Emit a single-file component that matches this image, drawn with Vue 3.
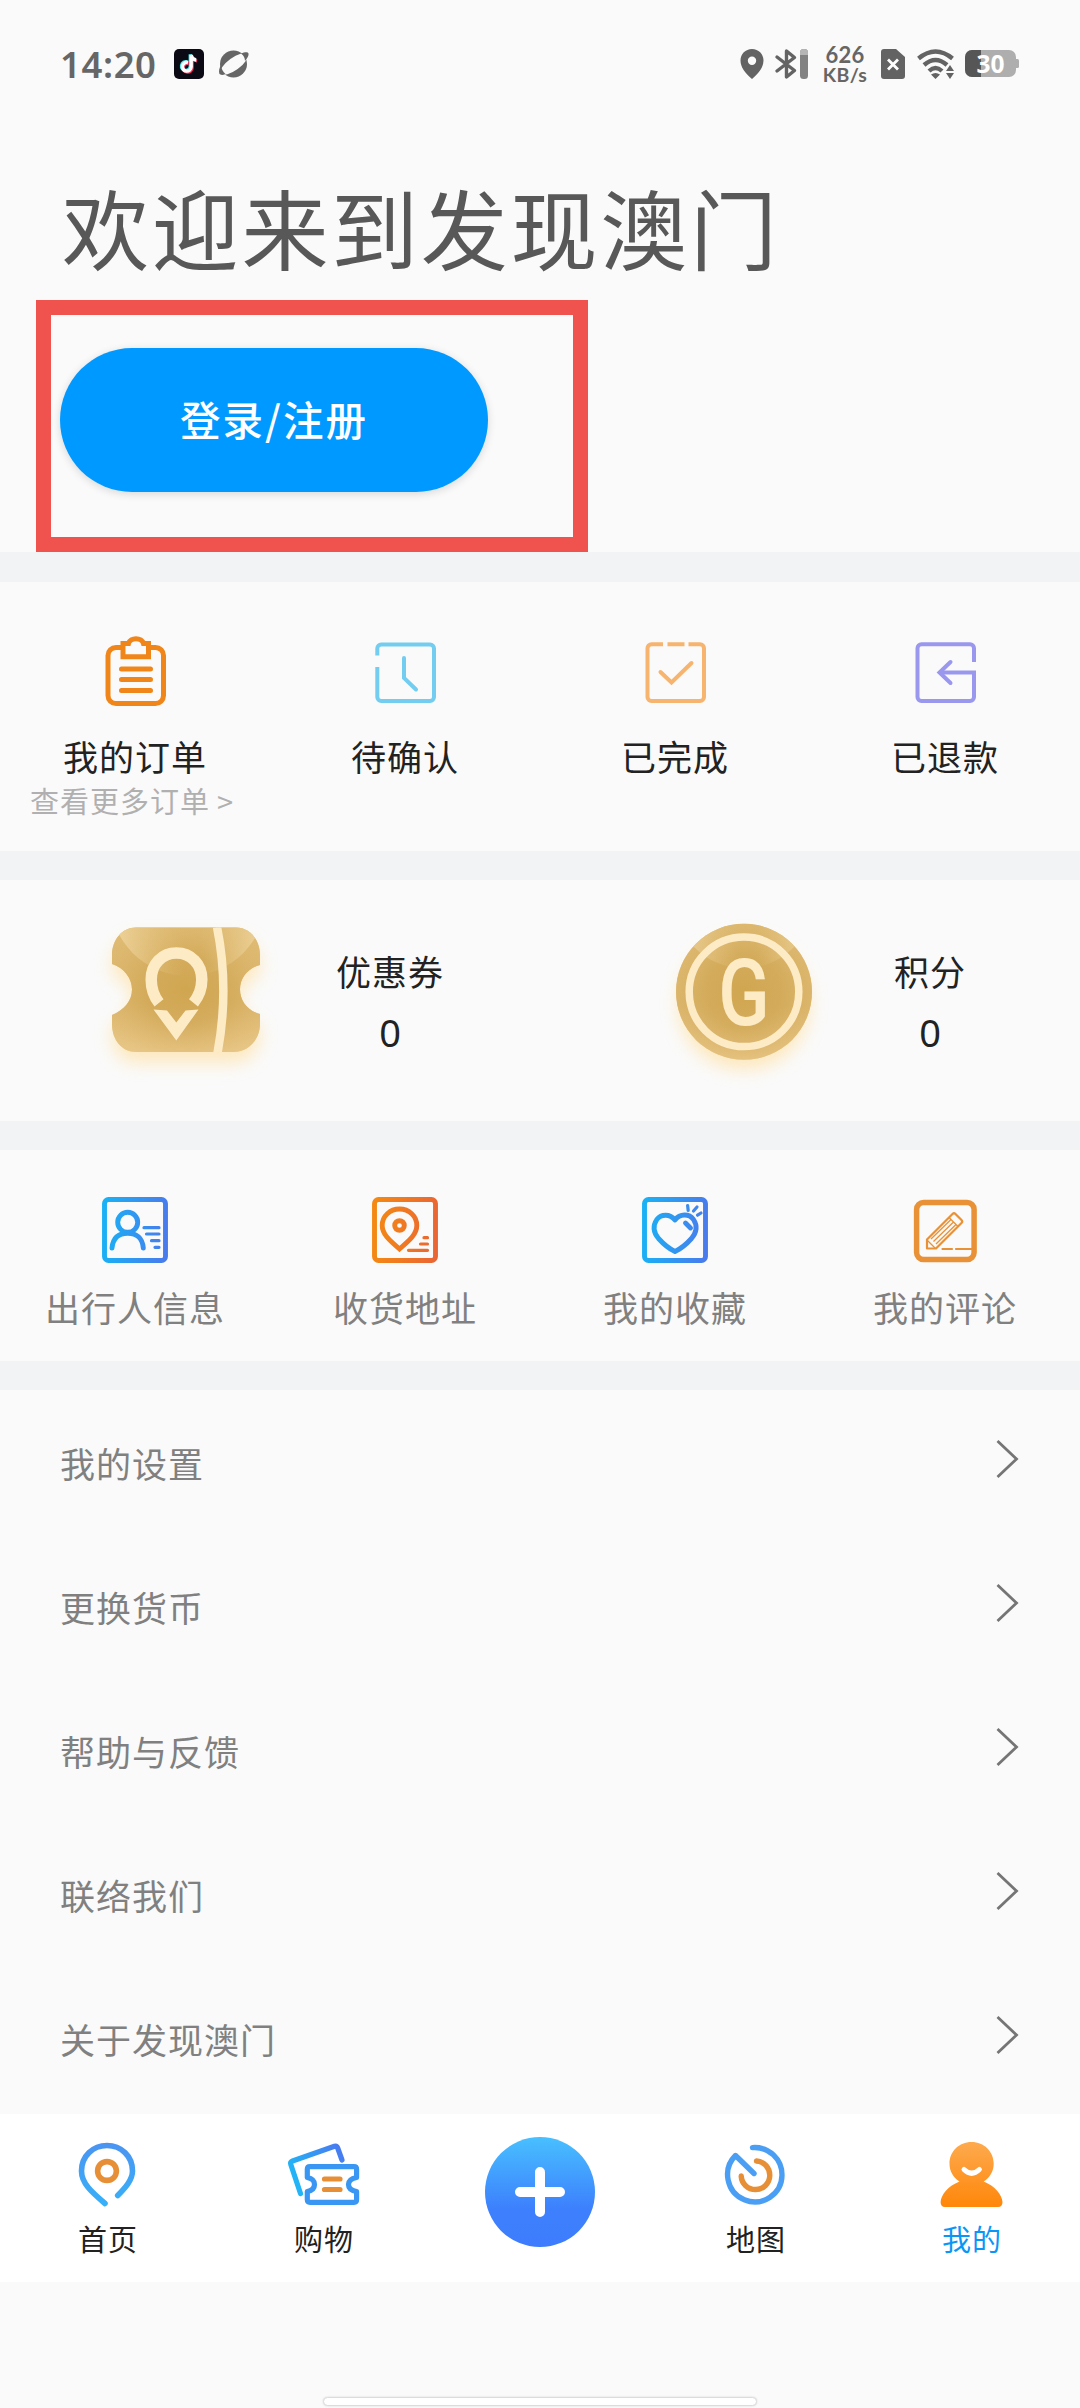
<script setup>
const menu = ['我的设置', '更换货币', '帮助与反馈', '联络我们', '关于发现澳门']
</script>

<template>
  <div class="page">
    <header class="status">
      <span class="time">14:20</span>
      <svg class="tiktok" width="30" height="30" viewBox="0 0 30 30">
        <rect width="30" height="30" rx="5" fill="#0b0a14" />
        <g fill="none" stroke-width="3.4">
          <path d="M14 13.5a4.4 4.4 0 1 0 3.2 4.3V6c.4 3 2.3 4.7 5 5" stroke="#3fe3e0" transform="translate(-.9 -.7)" />
          <path d="M14 13.5a4.4 4.4 0 1 0 3.2 4.3V6c.4 3 2.3 4.7 5 5" stroke="#f0305c" transform="translate(.9 .9)" />
          <path d="M14 13.5a4.4 4.4 0 1 0 3.2 4.3V6c.4 3 2.3 4.7 5 5" stroke="#fff" />
        </g>
      </svg>
      <svg class="planet" width="30" height="28" viewBox="0 0 30 28">
        <circle cx="14.5" cy="14" r="13.5" fill="#666" />
        <ellipse cx="15" cy="14" rx="16" ry="6.2" transform="rotate(-36 15 14)" fill="#fafafa" />
        <path d="M22 3.6C26 1.8 29 1.8 29.5 3.5C30 5.3 28.5 8 26 11C26 8 24.5 5.5 22 3.6ZM1.8 15.5C.3 18 -.4 21 .3 23.5C1.5 25.5 4 25.2 6.5 24C4 22 2.500 19 1.8 15.5Z" fill="#666" />
      </svg>
      <div class="indicators">
        <svg width="24" height="30" viewBox="0 0 24 30">
          <path fill-rule="evenodd" d="M12 0C5.5 0 .5 5 .5 11.5C.5 18 5 24 12 30C19 24 23.5 18 23.5 11.5C23.5 5 18.5 0 12 0ZM12 7.5a4.2 4.2 0 1 1 0 8.4a4.2 4.2 0 1 1 0-8.4Z" fill="#636363" />
        </svg>
        <svg class="bt" width="34" height="30" viewBox="0 0 34 30">
          <path d="M2 8L19.5 21.5L11.5 28V2L19.5 8.5L2 22" fill="none" stroke="#636363" stroke-width="3.4" stroke-linejoin="round" stroke-linecap="round" />
          <rect x="25" width="8" height="30" rx="3.5" fill="#828282" />
          <path d="M25 6V3.5a3.5 3.5 0 0 1 3.5-3.5h1a3.5 3.5 0 0 1 3.5 3.5V6z" fill="#b5b5b5" />
        </svg>
        <div class="speed"><span class="rate">626</span><span class="unit">KB/s</span></div>
        <svg class="sim" width="24" height="30" viewBox="0 0 24 30">
          <path d="M3 0H15L24 8V27a3 3 0 0 1-3 3H3a3 3 0 0 1-3-3V3a3 3 0 0 1 3-3Z" fill="#636363" />
          <path d="M8 11.5l8 8M16 11.5l-8 8" stroke="#fff" stroke-width="2.8" stroke-linecap="square" />
        </svg>
        <svg class="wifi" width="38" height="30" viewBox="0 0 38 30">
          <g fill="none" stroke="#636363" stroke-width="4.4">
            <path d="M1.5 9.5Q18.5-4.5 35.5 9.5" />
            <path d="M7 16Q18.5 6 30 16" />
            <path d="M12 22Q18.5 16 25 22" />
          </g>
          <path d="M14 25.5Q18.5 22.5 23 25.5L18.5 30ZM29 22l4-6l4 6ZM29 24h8l-4 6Z" fill="#636363" />
        </svg>
        <svg class="battery" width="55" height="28" viewBox="0 0 55 28">
          <rect width="51" height="27" rx="7" fill="#aeaeae" />
          <path d="M51 9h1.5q1.5 0 1.5 1.5v6q0 1.500-1.5 1.5H51z" fill="#aeaeae" />
          <path d="M7 0H16V27H7a7 7 0 0 1-7-7V7a7 7 0 0 1 7-7Z" fill="#565656" />
          <text x="25.5" y="22.5" text-anchor="middle" class="level">30</text>
        </svg>
      </div>
    </header>

    <section class="welcome">
      <h1>欢迎来到发现澳门</h1>
      <button class="login">登录/注册</button>
      <div class="highlight"></div>
    </section>

    <section class="orders">
      <div class="cell">
        <svg class="ico" viewBox="0 0 80 80" fill="none" stroke="#f08519" stroke-width="5">
          <path d="M26 15.5H21a8 8 0 0 0-8 8V63.500a8 8 0 0 0 8 8H60.500a8 8 0 0 0 8-8V23.500a8 8 0 0 0-8-8H55" />
          <path d="M28 11.5H33.5C35 5 47 5 48.5 11.5H53.5V24.8H28Z" />
          <path d="M26.5 37H55.500M26.5 47.5H55.500M26.5 58.5H55.500" stroke-linecap="round" />
        </svg>
        <span class="label dark">我的订单</span>
        <span class="more">查看更多订单<span class="gt">&gt;</span></span>
      </div>
      <div class="cell">
        <svg class="ico" viewBox="0 0 80 80" fill="none" stroke="#72cdf0" stroke-width="4">
          <path d="M12.3 23.5V16.5a4 4 0 0 1 4-4H65a4 4 0 0 1 4 4V65a4 4 0 0 1-4 4H16.3a4 4 0 0 1-4-4V35" />
          <path d="M39 26V46L51 57.5" stroke-linecap="round" />
        </svg>
        <span class="label dark">待确认</span>
      </div>
      <div class="cell">
        <svg class="ico" viewBox="0 0 80 80" fill="none" stroke="#f6b46e" stroke-width="4">
          <path d="M28 12.3H16.5a4 4 0 0 0-4 4V65a4 4 0 0 0 4 4H65a4 4 0 0 0 4-4V16.3a4 4 0 0 0-4-4H53.500M32.5 12.3H49.5" />
          <path d="M25.5 40L36.5 50.5L56.500 31" stroke-linecap="round" />
        </svg>
        <span class="label dark">已完成</span>
      </div>
      <div class="cell">
        <svg class="ico" viewBox="0 0 80 80" fill="none" stroke="#9a98ee" stroke-width="4">
          <path d="M69 30V16.3a4 4 0 0 0-4-4H16.500a4 4 0 0 0-4 4V65a4 4 0 0 0 4 4H65a4 4 0 0 0 4-4V40.5H35" />
          <path d="M45.5 30L34.5 40.5L45.5 51" stroke-linecap="round" />
        </svg>
        <span class="label dark">已退款</span>
      </div>
    </section>

    <section class="assets">
      <svg width="220" height="200" viewBox="0 0 220 200">
        <defs>
          <linearGradient id="gold" x1="0" y1="0" x2="0" y2="1">
            <stop offset="0" stop-color="#d9b366" /><stop offset=".6" stop-color="#d5ac5b" /><stop offset="1" stop-color="#ebca8c" />
          </linearGradient>
          <radialGradient id="core" cx=".5" cy=".5" r=".6">
            <stop offset="0" stop-color="#d0a650" /><stop offset=".45" stop-color="#d3aa5a" stop-opacity=".8" /><stop offset="1" stop-color="#e4c280" stop-opacity=".5" />
          </radialGradient>
          <linearGradient id="shine" x1="0" y1="0" x2="1" y2="0">
            <stop offset="0" stop-color="#f0d7a2" stop-opacity=".95" /><stop offset=".48" stop-color="#e2c07a" stop-opacity="0" />
            <stop offset=".58" stop-color="#e2c07a" stop-opacity="0" /><stop offset="1" stop-color="#f0d7a2" stop-opacity=".95" />
          </linearGradient>
          <filter id="glow" x="-30%" y="-30%" width="160%" height="170%"><feGaussianBlur stdDeviation="8.5" /></filter>
          <path id="ticket" d="M56 27.500H156C170 27.500 180 40 180 55V65C168 68 160 78 160 89.500C160 101 168 111 180 114V124C180 140 168 152 154 152H56C42 152 32 140 32 124V115C44 110 52 101 52 89.500C52 78 44 68 32 64V55C32 40 42 27.500 56 27.500Z" />
          <clipPath id="ticketClip"><use href="#ticket" /></clipPath>
        </defs>
        <use href="#ticket" fill="#ffdf9e" opacity=".65" transform="translate(0 11)" filter="url(#glow)" />
        <use href="#ticket" fill="url(#gold)" />
        <use href="#ticket" fill="url(#core)" />
        <g clip-path="url(#ticketClip)">
          <circle cx="108" cy="-2" r="78" fill="url(#shine)" />
          <path d="M137 27Q149.5 89 137.5 153" fill="none" stroke="#fdebc6" stroke-width="8.5" />
        </g>
        <path d="M79 102.8C73.5 96 71.2 88 71.2 79.5C71.2 64 82 53 96.4 53C111 53 121.8 64 121.8 79.5C121.8 88 119 96 113.5 102.8" fill="none" stroke="#fdebc6" stroke-width="11.5" />
        <path d="M73.5 109.5L87 110.5L96.3 122.5L105.5 110.5L118.5 109.5L96.3 140.5Z" fill="#fdebc6" />
      </svg>
      <div class="stat first"><span class="label dark">优惠券</span><span class="num">0</span></div>
      <svg class="coin" width="220" height="200" viewBox="0 0 220 200">
        <defs><clipPath id="coinClip"><circle cx="104" cy="91.8" r="68" /></clipPath></defs>
        <circle cx="104" cy="104" r="66" fill="#ffdf9e" opacity=".65" filter="url(#glow)" />
        <circle cx="104" cy="91.8" r="68" fill="url(#gold)" />
        <circle cx="104" cy="91.8" r="68" fill="url(#core)" />
        <circle cx="104" cy="-2" r="70" fill="url(#shine)" clip-path="url(#coinClip)" />
        <circle cx="104" cy="91.8" r="54.8" fill="none" stroke="#fdebc6" stroke-width="7.5" />
        <text class="g" text-anchor="middle" transform="translate(104 124.500) scale(.82 1)">G</text>
      </svg>
      <div class="stat second"><span class="label dark">积分</span><span class="num">0</span></div>
    </section>

    <section class="tools">
      <div class="cell">
        <svg class="ico" viewBox="0 0 80 80" fill="none" stroke="url(#blue)" stroke-width="4.9">
          <defs>
            <linearGradient id="blue" gradientUnits="userSpaceOnUse" x1="7" y1="40" x2="73" y2="44">
              <stop offset="0" stop-color="#19b2f5" /><stop offset="1" stop-color="#4a7aec" />
            </linearGradient>
            <linearGradient id="orange" gradientUnits="userSpaceOnUse" x1="7" y1="40" x2="73" y2="44">
              <stop offset="0" stop-color="#f48a12" /><stop offset="1" stop-color="#ea6534" />
            </linearGradient>
          </defs>
          <rect x="9.500" y="9.500" width="61" height="61" rx="4" />
          <circle cx="32.7" cy="32.3" r="10" />
          <path d="M17 58C18 47.5 24 43.3 32.7 43.3C41.5 43.3 47.5 48 48.3 58" stroke-linecap="round" />
          <path d="M49 37.7L64 37.71M51.5 44L64 44.01M56.5 50.7L64 50.71M60 57.3L64 57.31" stroke-width="3.200" stroke-linecap="round" />
        </svg>
        <span class="label">出行人信息</span>
      </div>
      <div class="cell">
        <svg class="ico" viewBox="0 0 80 80" fill="none" stroke="url(#orange)" stroke-width="4.900">
          <rect x="9.5" y="9.5" width="61" height="61" rx="4" />
          <path d="M34.5 59C24 50 17.2 44 17.2 35.5C17.2 26 25 19 34.5 19C44 19 51.8 26 51.8 35.5C51.8 44 45 50 34.5 59Z" />
          <circle cx="34.5" cy="35.5" r="4.8" />
          <path d="M59 47.7L62.5 47.71M55.5 54L62.5 54.01M43.5 60.3L62.5 60.31" stroke-width="3.2" stroke-linecap="round" />
        </svg>
        <span class="label">收货地址</span>
      </div>
      <div class="cell">
        <svg class="ico" viewBox="0 0 80 80" fill="none" stroke="url(#blue)" stroke-width="4.9">
          <rect x="9.5" y="9.5" width="61" height="61" rx="4" />
          <path d="M40 30C35 23.5 26 24 21.800 29.500C17.500 36 19 43 23.500 48.500C28 53.500 33.500 58.500 40 61.500C46.500 58.500 52 53.500 56.500 48.500C61 43 62.800 36 58.500 29.500C54 23.500 45 23.500 40 30Z" stroke-linejoin="round" />
          <path d="M50.5 33L55.5 38" stroke-linecap="round" />
          <path d="M52.6 15.5L53.2 20.5M62 17L58.5 21M66 23L62.5 25.2" stroke-width="3.2" stroke-linecap="round" />
        </svg>
        <span class="label">我的收藏</span>
      </div>
      <div class="cell">
        <svg class="ico" viewBox="0 0 80 80" fill="none" stroke="#e99136" stroke-width="2.2">
          <rect x="11.6" y="12.5" width="57.500" height="57" rx="7" stroke-width="5.5" />
          <path d="M22 58.5V49.5L47.5 24Q49 22.5 50.5 24L56.5 30Q58 31.500 56.5 33L31 58.5Z" stroke-linejoin="round" />
          <path d="M44 27.5L53 36.5M22.5 50.5L30.5 58.5M26 49L46 29.5M31 54L51 34.5M28.5 51.5L48.5 32" stroke-width="1.3" />
          <path d="M37.5 59H47M51 59H68" stroke-linecap="round" />
        </svg>
        <span class="label">我的评论</span>
      </div>
    </section>

    <ul class="menu">
      <li v-for="item in menu" :key="item">
        <span>{{ item }}</span>
        <svg width="24" height="42" viewBox="0 0 24 42"><path d="M1.5 3L20.500 21L1.5 39" fill="none" stroke="#757575" stroke-width="2.8" /></svg>
      </li>
    </ul>

    <nav class="tabs">
      <div class="tab">
        <svg class="ico" viewBox="0 0 80 80" fill="none" stroke-width="5.6">
          <defs><linearGradient id="pin" x1="0" y1="0" x2="0" y2="1"><stop offset="0" stop-color="#4a95f2" /><stop offset="1" stop-color="#38b0f8" /></linearGradient></defs>
          <path d="M37 69.5C23 57.5 13.5 49 13.5 37C13.5 22 25 11.5 39 11.5C53 11.5 64.5 22 64.5 37C64.5 46 57 54 49.7 61.5" stroke="url(#pin)" stroke-linecap="round" />
          <circle cx="39" cy="37" r="9.4" stroke="#e78f36" />
        </svg>
        <span>首页</span>
      </div>
      <div class="tab">
        <svg class="ico" viewBox="0 0 80 80" fill="none" stroke-width="5.2" stroke-linecap="round" stroke-linejoin="round">
          <defs><linearGradient id="card" x1="0" y1=".5" x2="1" y2="0"><stop offset="0" stop-color="#22b4f6" /><stop offset="1" stop-color="#4a78f0" /></linearGradient></defs>
          <path d="M16.5 59.5L6.8 30.5Q6 28 8.5 27L50.5 12.3Q52.8 11.6 53.7 14L58 26" stroke="url(#card)" />
          <path d="M26 32.7H70Q72.6 32.7 72.6 35.3V43.500C67 44.500 64.500 47 64.500 50.500C64.500 54 67 56.500 72.600 57.500V65.500Q72.600 68.300 70 68.300H26Q23.300 68.300 23.300 65.500V57.500C28.500 56.500 30.500 54 30.500 50.500C30.500 47 28.500 44.500 23.300 43.500V35.300Q23.300 32.700 26 32.700Z" stroke="#3997f3" />
          <path d="M40.5 45H56M40.5 55.5H56" stroke="#e78f36" />
        </svg>
        <span>购物</span>
      </div>
      <div class="tab">
        <div class="plus">
          <svg width="110" height="110" viewBox="0 0 110 110"><path d="M55 35V75M35 55H75" stroke="#fff" stroke-width="10" stroke-linecap="round" /></svg>
        </div>
      </div>
      <div class="tab">
        <svg class="ico" viewBox="0 0 80 80" fill="none" stroke-width="5.4" stroke-linejoin="round">
          <path d="M36.5 13.6C53 12.5 66 25 66 41A27.200 27.200 0 1 1 19.500 21.500L38 39.500" stroke="#4a9ff4" stroke-linecap="round" />
          <path d="M40.500 27A14.3 14.3 0 1 1 25.2 42" stroke="#e78f36" stroke-linecap="round" />
        </svg>
        <span>地图</span>
      </div>
      <div class="tab active">
        <svg class="ico" viewBox="0 0 80 80">
          <defs><linearGradient id="me" gradientUnits="userSpaceOnUse" x1="0" y1="8" x2="0" y2="72"><stop offset="0" stop-color="#fdaa4e" /><stop offset="1" stop-color="#ff870a" /></linearGradient></defs>
          <path d="M39.600 8C27 8 17.500 17.500 17.500 29.500C17.500 37.500 21.500 43.500 27.500 47.500C16 52 9 61 8.600 68Q8.600 73 13 73H66Q70.500 73 70.500 68C70 61 63 52 51.700 47.500C57.700 43.500 61.700 37.500 61.700 29.500C61.700 17.500 52 8 39.600 8Z" fill="url(#me)" />
          <path d="M32 35.5Q39.6 43 47.4 35.5" fill="none" stroke="#fff" stroke-width="5" stroke-linecap="round" />
        </svg>
        <span>我的</span>
      </div>
    </nav>
    <div class="home"><div class="bar"></div></div>
  </div>
</template>

<style>
body { margin: 0; background: #fafafa; }
</style>

<style scoped>
.page { width: 1080px; height: 2408px; display: flex; flex-direction: column; overflow: hidden; background: #fafafa; font-family: "Noto Sans CJK SC", "Noto Sans", sans-serif; letter-spacing: 1px; color: #222; }
svg { display: block; flex: none; overflow: visible; }
.status { height: 128px; flex: none; box-sizing: border-box; padding: 0 60px 0 60px; display: flex; align-items: center; }
.time { font: 600 36.5px/40px "Noto Sans", sans-serif; letter-spacing: 0.6px; color: #666; width: 114px; white-space: nowrap; }
.planet { margin-left: 15px; }
.indicators { display: flex; align-items: center; margin-left: auto; }
.bt { margin-left: 11px; }
.speed { width: 46px; margin-left: 13px; display: flex; flex-direction: column; align-items: center; font-family: Lato, sans-serif; font-weight: 700; letter-spacing: 0.3px; color: #666; white-space: nowrap; }
.rate { font-size: 22px; line-height: 21px; }
.unit { font-size: 19.5px; line-height: 19px; }
.sim { margin-left: 13px; }
.wifi { margin-left: 12px; }
.battery { margin-left: 10px; }
.level { font: 700 24.5px "Noto Sans", sans-serif; fill: #fff; letter-spacing: 0; }
.welcome { position: relative; height: 424px; flex: none; padding-left: 62px; }
h1 { margin: 0; padding-top: 38px; font-size: 87px; font-weight: 400; line-height: 120px; letter-spacing: 2.7px; color: #585858; }
.login { display: block; margin: 62px 0 0 -2px; width: 428px; height: 144px; border: 0; border-radius: 72px; background: #0099ff; color: #fff; font-family: inherit; font-size: 40.5px; font-weight: 500; letter-spacing: 2px; line-height: 60px; padding: 0 0 2px; box-shadow: 0 2px 9px rgba(0, 0, 0, .14); }
.highlight { position: absolute; left: 36px; top: 172px; width: 552px; height: 252px; box-sizing: border-box; border: 15px solid #f0524d; }
.orders, .tools { display: grid; grid-template-columns: repeat(4, 270px); border-top: 30px solid #f2f3f5; flex: none; box-sizing: border-box; }
.orders { height: 299px; padding-top: 50px; }
.tools { height: 240px; padding-top: 40px; border-top-width: 29px; }
.cell { display: flex; flex-direction: column; align-items: center; }
.ico { width: 80px; height: 80px; }
.label { font-size: 35px; line-height: 40px; color: #808080; white-space: nowrap; }
.dark { color: #222; }
.orders .label { margin-top: 24px; }
.tools .label { margin-top: 17px; }
.more { margin: 10px 6px 0 0; font-size: 29px; line-height: 28px; color: #b0b0b0; white-space: nowrap; }
.gt { margin-left: 7px; font-size: 29px; }
.assets { display: flex; height: 270px; flex: none; box-sizing: border-box; border-top: 29px solid #f2f3f5; padding: 20px 0 0 80px; }
.stat { display: flex; flex-direction: column; align-items: center; padding-top: 51px; }
.first { width: 180px; }
.second { width: 140px; }
.coin { margin-left: 160px; }
.num { margin-top: 19px; font-family: "Noto Sans", sans-serif; font-size: 38px; line-height: 44px; letter-spacing: 0; }
.g { font-family: Roboto, sans-serif; font-weight: 500; font-size: 92px; fill: #fdebc6; letter-spacing: 0; }
.menu { list-style: none; margin: 0; padding: 0 60px 4px 60px; border-top: 29px solid #f2f3f5; flex: none; }
.menu li { height: 144px; display: flex; align-items: center; justify-content: space-between; font-size: 35px; line-height: 40px; color: #808080; }
.menu span { padding-top: 2px; }
.menu svg { margin-bottom: 7px; }
.tabs { height: 168px; flex: none; background: #fff; display: grid; grid-template-columns: repeat(5, 216px); }
.tab { display: flex; flex-direction: column; align-items: center; padding-top: 20px; font-size: 29px; line-height: 30px; }
.tab span { margin-top: 9px; }
.active { color: #0a96f6; }
.plus { margin-top: 3px; width: 110px; height: 110px; border-radius: 50%; background: linear-gradient(#48c0ff, #3d80fd 65%, #3d7dfd); }
.home { flex: 1; display: flex; justify-content: center; align-items: flex-end; padding-bottom: 2px; }
.bar { width: 432px; height: 7px; border: 1px solid #dcdcdc; border-radius: 5px; background: #fff; box-shadow: 0 0 2px rgba(0, 0, 0, .15); }
</style>
